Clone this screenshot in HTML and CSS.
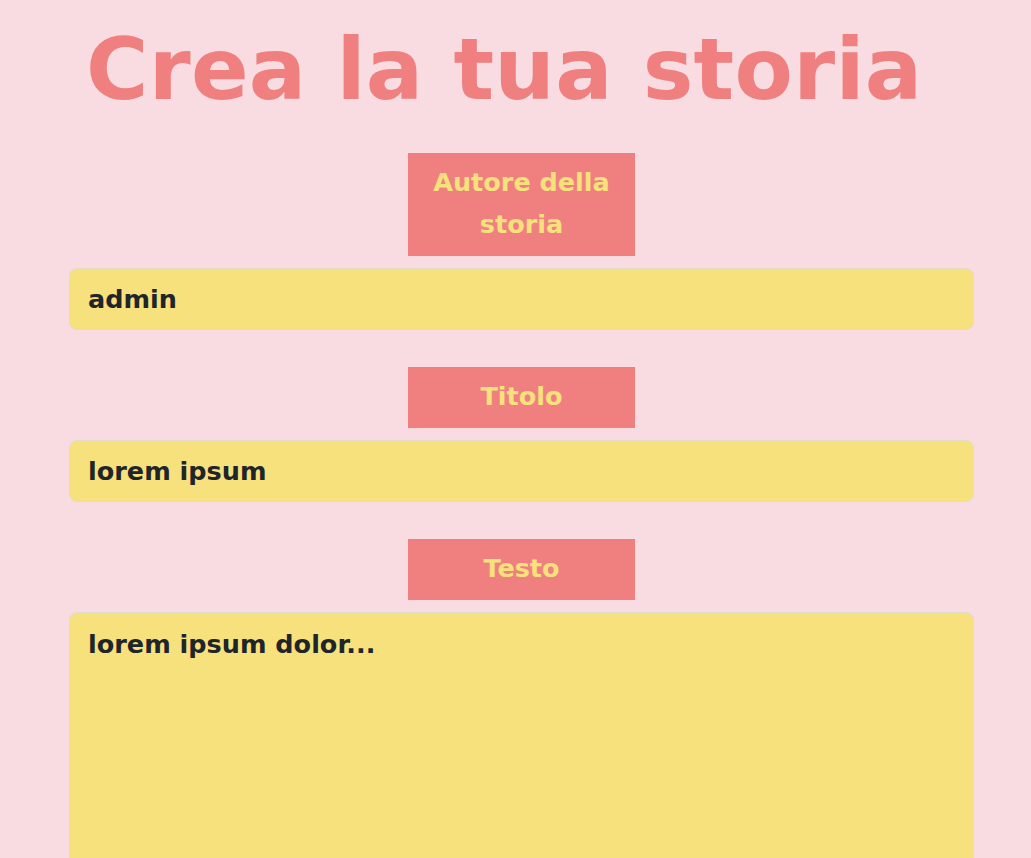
FILE: index.html
```html
<!DOCTYPE html>
<html lang="it">
<head>
<meta charset="utf-8">
<title>Crea la tua storia</title>
<link rel="stylesheet" href="styles.css">
</head>
<body>
<main class="page">
  <h1 class="title">Crea la tua storia</h1>
  <form class="story-form">
    <div class="field">
      <label class="label label-wrap" for="autore">Autore della storia</label>
      <input class="input" id="autore" type="text" value="admin">
    </div>
    <div class="field">
      <label class="label" for="titolo">Titolo</label>
      <input class="input" id="titolo" type="text" value="lorem ipsum">
    </div>
    <div class="field">
      <label class="label" for="testo">Testo</label>
      <textarea class="input textarea" id="testo" spellcheck="true">lorem ipsum dolor...</textarea>
    </div>
  </form>
</main>
</body>
</html>
```

FILE: styles.css
```css
* { box-sizing: border-box; }
html, body { margin: 0; padding: 0; }
body {
  background: #f9dce1;
  font-family: "DejaVu Sans", sans-serif;
  overflow: hidden;
}
.page {
  width: 905px;
  margin: 0 0 0 69px;
}
.title {
  margin: 0;
  padding: 20px 0 0 17px;
  height: 153px;
  font-size: 85px;
  line-height: 100px;
  font-weight: 700;
  color: #f08080;
  letter-spacing: 0.3px;
  white-space: nowrap;
}
.story-form {
  display: flex;
  flex-direction: column;
  gap: 37px;
}
.field {
  display: flex;
  flex-direction: column;
  align-items: center;
  gap: 12px;
}
.label {
  display: block;
  width: 227px;
  background: #f08080;
  color: #f7e17d;
  font-weight: 700;
  font-size: 25.5px;
  line-height: 42px;
  padding: 8px 12px 11px;
  text-align: center;
}
.input {
  display: block;
  width: 100%;
  height: 62px;
  margin: 0;
  background: #f6e17c;
  border: 1px solid #e2dccb;
  border-radius: 8px;
  padding: 0 18px;
  font-family: "DejaVu Sans", sans-serif;
  font-weight: 700;
  font-size: 25.5px;
  color: #212529;
  outline: none;
}
.textarea {
  height: 300px;
  padding-top: 13px;
  resize: none;
  line-height: 36px;
}
```
